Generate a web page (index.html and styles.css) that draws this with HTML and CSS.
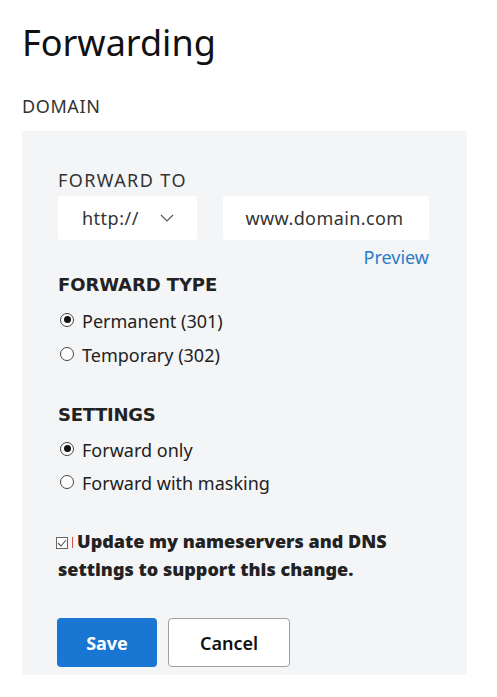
FILE: index.html
```html
<!DOCTYPE html>
<html>
<head>
<meta charset="utf-8">
<link rel="stylesheet" href="styles.css">
</head>
<body>
<div class="page">
  <h1 class="title">Forwarding</h1>
  <div class="domain">DOMAIN</div>
  <div class="panel">
    <div class="label">FORWARD TO</div>
    <div class="fields">
      <div class="select">
        <span>http://</span>
        <svg class="chev" width="14" height="8" viewBox="0 0 14 8"><path d="M1 1 L7 7 L13 1" fill="none" stroke="#555" stroke-width="1.1"/></svg>
      </div>
      <div class="input">www.domain.com</div>
    </div>
    <div class="preview-row"><a class="preview">Preview</a></div>
    <div class="heading">FORWARD TYPE</div>
    <div class="options">
      <label class="opt"><span class="radio on"></span>Permanent (301)</label>
      <label class="opt"><span class="radio"></span>Temporary (302)</label>
    </div>
    <div class="heading h2">SETTINGS</div>
    <div class="options o2">
      <label class="opt"><span class="radio on"></span>Forward only</label>
      <label class="opt"><span class="radio"></span>Forward with masking</label>
    </div>
    <div class="check">
      <span class="box"><svg width="10" height="8" viewBox="0 0 10 8"><path d="M1 4 L4 7 L9 1" fill="none" stroke="#555" stroke-width="1.1"/></svg></span><span class="mark"></span>Update my nameservers and DNS settings to support this change.
    </div>
    <div class="buttons">
      <button class="btn save">Save</button>
      <button class="btn cancel">Cancel</button>
    </div>
  </div>
</div>
</body>
</html>
```
FILE: styles.css
```css
* { box-sizing: border-box; }
body {
  margin: 0;
  background: #fff;
  font-family: "Noto Sans", "Open Sans", sans-serif;
  color: #222;
}
.page { padding: 0 0 0 22px; }
.title {
  margin: 0;
  padding-top: 19px;
  font-size: 36px;
  line-height: 48px;
  font-weight: 400;
  color: #111;
}
.domain {
  margin-top: 27px;
  font-size: 18px;
  line-height: 24px;
  color: #333;
  letter-spacing: 0.6px;
}
.panel {
  margin-top: 13px;
  width: 445px;
  height: 544px;
  background: #f4f5f7;
  padding: 37px 38px 0 36px;
}
.label {
  font-size: 18px;
  line-height: 24px;
  color: #333;
  letter-spacing: 1.4px;
}
.fields {
  margin-top: 4px;
  display: flex;
  gap: 26px;
}
.select, .input {
  height: 44px;
  background: #fff;
  border-radius: 3px;
  display: flex;
  align-items: center;
  font-size: 18px;
  color: #333;
}
.select {
  width: 139px;
  padding: 0 23px 0 24px;
  justify-content: space-between;
  letter-spacing: 0.5px;
}
.input {
  width: 206px;
  justify-content: center;
  letter-spacing: 0.4px;
  padding-right: 3px;
}
.preview-row {
  display: flex;
  justify-content: flex-end;
  margin-top: 5px;
}
.preview {
  font-size: 18px;
  line-height: 24px;
  color: #2b7bc8;
}
.heading {
  margin-top: 4px;
  font-family: "DejaVu Sans", sans-serif;
  font-size: 18px;
  line-height: 24px;
  font-weight: 700;
  color: #222;
  letter-spacing: -0.1px;
}
.h2 { margin-top: 36px; letter-spacing: -0.3px; }
.options {
  margin-top: 12px;
  display: flex;
  flex-direction: column;
  gap: 10px;
}
.o2 { margin-top: 11px; gap: 9px; }
.opt {
  display: flex;
  align-items: center;
  font-size: 18px;
  line-height: 24px;
  color: #222;
  padding-left: 2px;
}
.radio {
  width: 14px;
  height: 14px;
  border: 1px solid #444;
  border-radius: 50%;
  margin-right: 8px;
  margin-top: -3px;
  position: relative;
  background: #fff;
  flex: none;
}
.radio.on::after {
  content: "";
  position: absolute;
  left: 2.5px;
  top: 2.5px;
  width: 7px;
  height: 7px;
  border-radius: 50%;
  background: #111;
}
.check {
  margin-top: 32px;
  font-size: 18px;
  line-height: 28px;
  font-weight: 900;
  color: #222;
  width: 350px;
}
.box {
  display: inline-flex;
  align-items: center;
  justify-content: center;
  width: 12px;
  height: 12px;
  border: 1px solid #666;
  background: #fff;
  vertical-align: 1px;
  margin-left: -2px;
}
.mark {
  display: inline-block;
  width: 1px;
  height: 11px;
  background: #d05050;
  margin: 0 4px 0 4px;
  vertical-align: 0;
}
.buttons {
  margin-top: 35px;
  display: flex;
  gap: 11px;
}
.btn {
  height: 49px;
  border-radius: 4px;
  font-family: inherit;
  font-size: 18px;
}
.save {
  width: 100px;
  background: #1976d2;
  color: #fff;
  border: none;
  font-weight: 700;
  margin-left: -1px;
}
.cancel {
  width: 122px;
  background: #fff;
  color: #111;
  border: 1px solid #a0a0a0;
  font-weight: 600;
}
```
